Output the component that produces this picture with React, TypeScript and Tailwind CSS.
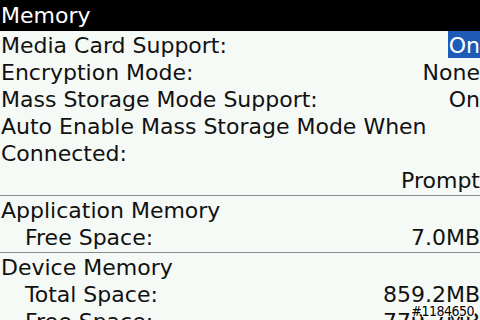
import React from "react";

type Row = { label: string; value?: string; indent?: boolean; selected?: boolean };

const sections: Row[][] = [
  [
    { label: "Media Card Support:", value: "On", selected: true },
    { label: "Encryption Mode:", value: "None" },
    { label: "Mass Storage Mode Support:", value: "On" },
    { label: "Auto Enable Mass Storage Mode When" },
    { label: "Connected:" },
    { label: "", value: "Prompt" },
  ],
  [
    { label: "Application Memory" },
    { label: "Free Space:", value: "7.0MB", indent: true },
  ],
  [
    { label: "Device Memory" },
    { label: "Total Space:", value: "859.2MB", indent: true },
    { label: "Free Space:", value: "779.7MB", indent: true },
  ],
];

function OptionRow({ row }: { row: Row }) {
  return (
    <div className="flex h-[27px] items-start justify-between whitespace-nowrap">
      <span className={"h-[27px] pt-px " + (row.indent ? "pl-[25px]" : "pl-px")}>{row.label}</span>
      {row.value && (
        <span className={"h-[27px] pt-px " + (row.selected ? "bg-[#1d5bb6] pl-px text-white" : "")}>
          {row.value}
        </span>
      )}
    </div>
  );
}

export default function App() {
  return (
    <div
      className="relative h-[320px] w-[480px] overflow-hidden bg-[#f6faf6] text-[22px] leading-[27px] text-[#111]"
      style={{ fontFamily: '"DejaVu Sans", sans-serif' }}
    >
      {/* Title bar */}
      <div className="flex h-[31px] items-center bg-black pl-px text-white">Memory</div>

      {sections.map((rows, i) => (
        <div
          key={i}
          className={i < sections.length - 1 ? "border-b border-[#8a8a8a] pb-[2px]" : ""}
        >
          {rows.map((r, j) => (
            <OptionRow key={j} row={r} />
          ))}
        </div>
      ))}

      {/* Watermark */}
      <span
        className="absolute bottom-[2px] right-[6px] text-[14px] leading-none tracking-[-0.5px] text-black"
        style={{
          fontFamily: '"DejaVu Sans Condensed", "DejaVu Sans", sans-serif',
          textShadow:
            "1px 0 0 #fff, -1px 0 0 #fff, 0 1px 0 #fff, 0 -1px 0 #fff, 1px 1px 0 #fff, -1px -1px 0 #fff, 1px -1px 0 #fff, -1px 1px 0 #fff",
        }}
      >
        #1184650
      </span>
    </div>
  );
}
